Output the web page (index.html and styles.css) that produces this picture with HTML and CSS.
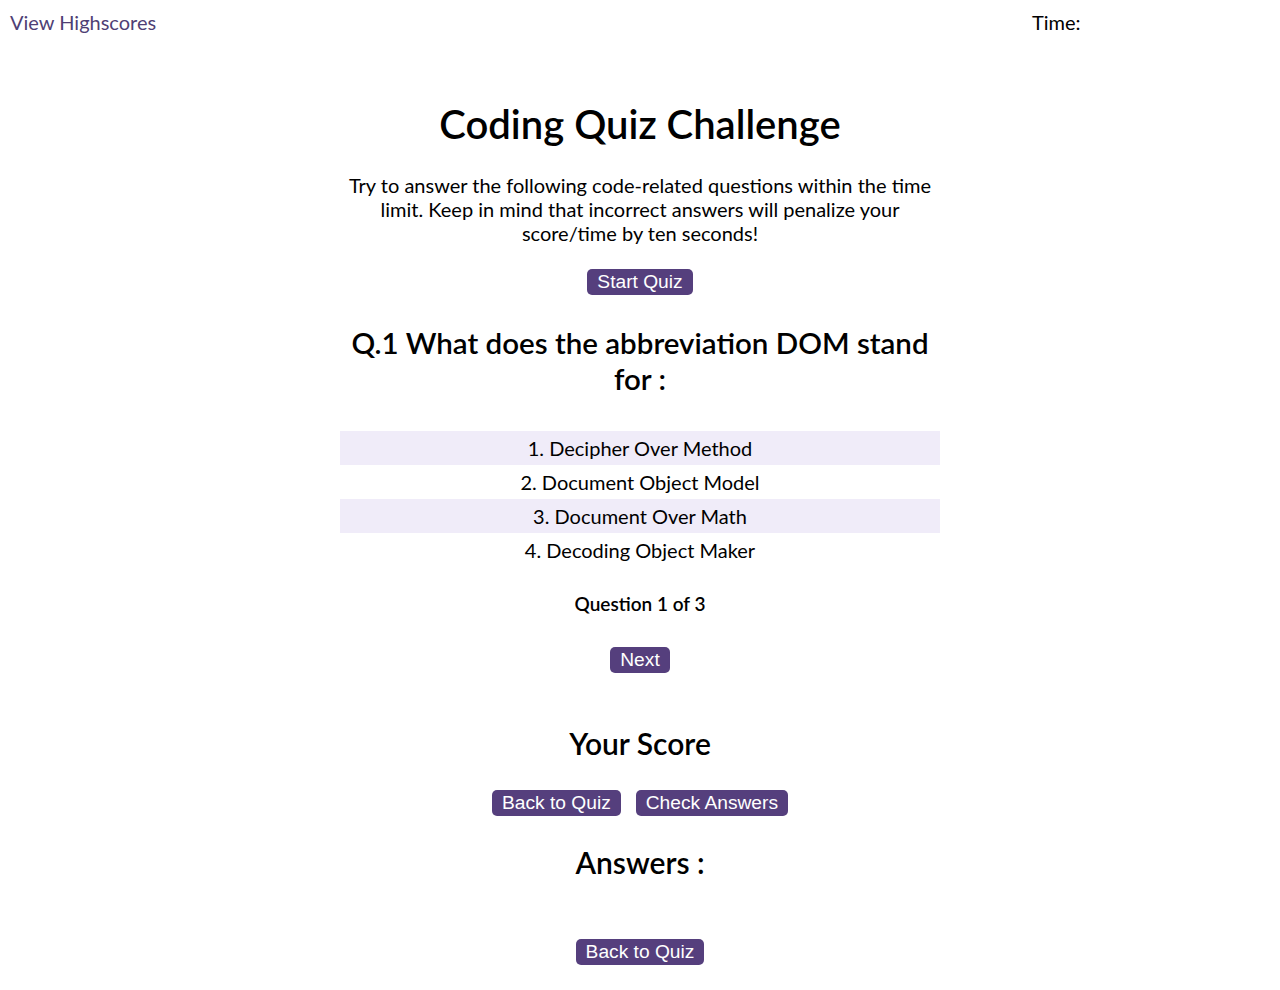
FILE: index.html
```html
<!DOCTYPE html>
<html lang="en">
<head>
<meta charset="utf-8">
<title>Coding Quiz Challenge</title>
<link rel="stylesheet" href="styles.css">
</head>
<body>
<header class="topbar">
  <a class="highscores" href="#">View Highscores</a>
  <div class="timer">Time: <span class="time-value"></span></div>
</header>
<main class="quiz">
  <section class="intro">
    <h1 class="title">Coding Quiz Challenge</h1>
    <p class="lead">Try to answer the following code-related questions within the time limit. Keep in mind that incorrect answers will penalize your score/time by ten seconds!</p>
    <button class="btn">Start Quiz</button>
  </section>
  <section class="question">
    <h2 class="q-title">Q.1 What does the abbreviation DOM stand for :</h2>
    <ul class="options">
      <li class="option alt">1. Decipher Over Method</li>
      <li class="option">2. Document Object Model</li>
      <li class="option alt">3. Document Over Math</li>
      <li class="option">4. Decoding Object Maker</li>
    </ul>
    <p class="progress">Question 1 of 3</p>
    <button class="btn">Next</button>
  </section>
  <section class="score">
    <h2 class="score-title">Your Score</h2>
    <div class="btn-row">
      <button class="btn">Back to Quiz</button>
      <button class="btn">Check Answers</button>
    </div>
  </section>
  <section class="answers">
    <h2 class="answers-title">Answers :</h2>
    <div class="answer-list"></div>
    <button class="btn">Back to Quiz</button>
  </section>
</main>
</body>
</html>
```

FILE: styles.css
```css
* { box-sizing: border-box; }
body {
  margin: 0;
  font-family: "Lato", "Noto Sans", sans-serif;
  color: #000;
  background: #fff;
}
.topbar {
  display: flex;
  justify-content: space-between;
  align-items: center;
  height: 44px;
  padding: 0 200px 0 10px;
  font-size: 20px;
}
.highscores {
  color: #4f3f75;
  text-decoration: none;
}
.timer { width: 48px; white-space: nowrap; }
.quiz {
  width: 600px;
  margin: 0 auto;
  text-align: center;
}
.intro { padding-top: 56px; }
.title {
  margin: 0;
  font-size: 40px;
  font-weight: 600;
  line-height: 48px;
}
.lead {
  margin: 25px 0 0;
  font-size: 20px;
  line-height: 24px;
}
.btn {
  font-family: "Liberation Sans", Arial, sans-serif;
  font-size: 19.2px;
  line-height: 22px;
  color: #fff;
  background: #553f7d;
  border: none;
  border-radius: 5px;
  padding: 2px 10px 2px;
  cursor: pointer;
}
.intro .btn { margin-top: 24px; }
.question { padding-top: 30px; }
.q-title {
  margin: 0;
  font-size: 29.5px;
  font-weight: 600;
  line-height: 36px;
}
.options {
  list-style: none;
  margin: 34px 0 0;
  padding: 0;
}
.option {
  height: 34px;
  line-height: 34px;
  font-size: 20px;
}
.option.alt { background: #f0ecf9; }
.progress {
  margin: 25px 0 0;
  font-size: 19px;
  font-weight: 600;
  line-height: 24px;
}
.question .btn { margin-top: 31px; }
.score { padding-top: 50px; }
.score-title {
  margin: 0;
  font-size: 30px;
  font-weight: 600;
  line-height: 40px;
}
.btn-row {
  display: flex;
  justify-content: center;
  gap: 15px;
  margin-top: 27px;
}
.answers { padding-top: 26px; }
.answers-title {
  margin: 0;
  font-size: 30px;
  font-weight: 600;
  line-height: 40px;
}
.answer-list { height: 57px; }
```
